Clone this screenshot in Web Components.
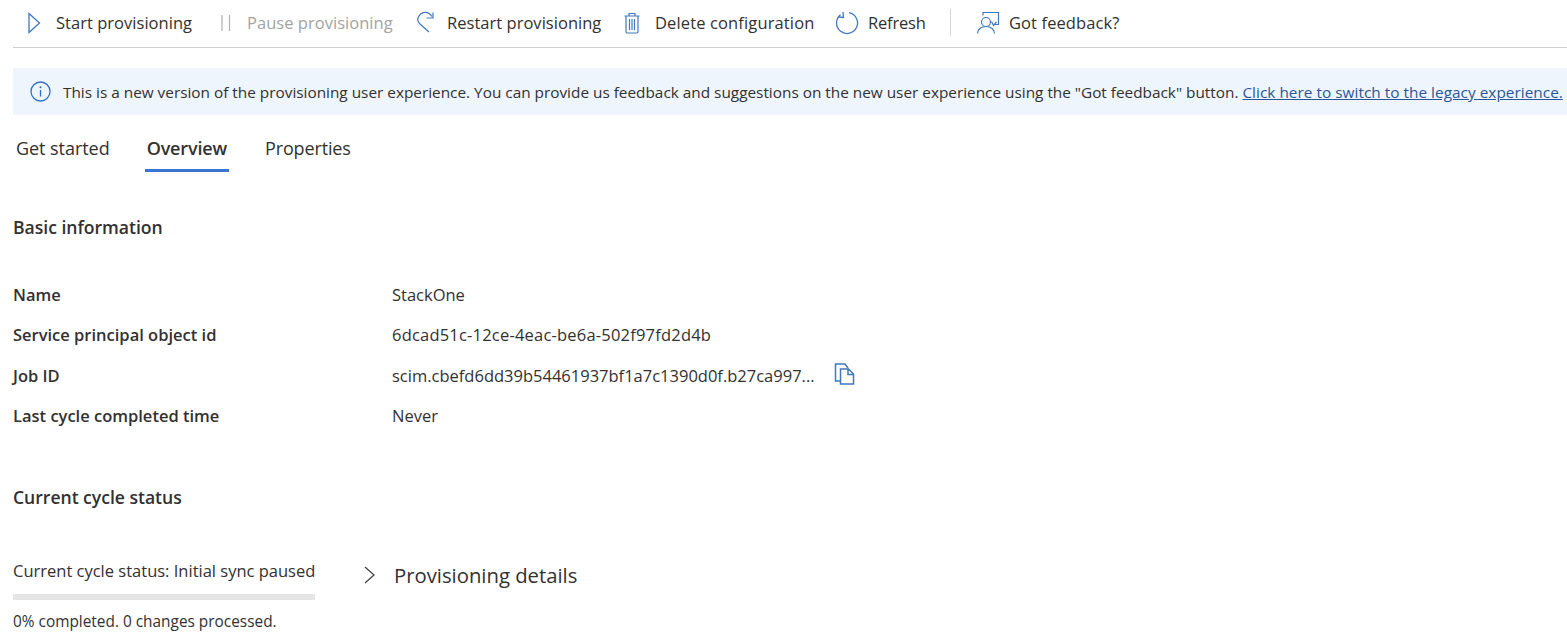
<!DOCTYPE html>
<html lang="en"><head><meta charset="utf-8"><title>Provisioning</title>
<style>
html,body{margin:0;background:#fff;height:100%;overflow:hidden}
body{font-family:"Open Sans","Noto Sans",sans-serif;color:#323130;font-size:16px}
</style></head><body>
<prov-page>
  <prov-toolbar>
    <tool-btn width="184" pad="14" text-x="29"><svg slot="icon" width="14" height="22" viewBox="0 0 14 22"><path d="M2 1.500v19l10.500-9.500z" fill="none" stroke="#3f78c0" stroke-width="1.300"/></svg>Start provisioning</tool-btn>
    <tool-btn disabled width="199" pad="23" text-x="27"><svg slot="icon" width="12" height="18" viewBox="0 0 12 18"><path d="M2 1v16M9.500 1v16" fill="none" stroke="#b5b5b5" stroke-width="1.300"/></svg>Pause provisioning</tool-btn>
    <tool-btn width="208" pad="20" text-x="31"><svg slot="icon" width="20" height="24" viewBox="0 1 20 24"><path d="M16 6.500C12 .5 5 1 2 8c-1 2 0 4 2 6l9 8" fill="none" stroke="#3f78c0" stroke-width="1.200"/><path d="M17 2.500V8h-6.500" fill="none" stroke="#3f78c0" stroke-width="1.200"/></svg>Restart provisioning</tool-btn>
    <tool-btn width="212" pad="20" text-x="31" style="letter-spacing:.13px"><svg slot="icon" width="16" height="22" viewBox="0 0 16 22"><path d="M.5 4h15M5 4V1.500h6V4M2 4v15.800a1.200 1.200 0 0 0 1.200 1.200h9.600a1.200 1.200 0 0 0 1.200-1.200V4M5.500 7v11M8 7v11M10.500 7v11" fill="none" stroke="#3f78c0" stroke-width="1.200"/></svg>Delete configuration</tool-btn>
    <tool-btn width="134" pad="19" text-x="33" style="letter-spacing:-.2px"><svg slot="icon" width="24" height="24" viewBox="0 0 24 24"><path d="M14 1.700A10.500 10.500 0 1 1 5.500 3.800" fill="none" stroke="#3f78c0" stroke-width="1.300"/><path d="M8 1l.5 5.500-5-.5" fill="none" stroke="#3f78c0" stroke-width="1.300"/></svg>Refresh</tool-btn>
    <tool-sep></tool-sep>
    <tool-btn width="170" pad="25" text-x="33" style="letter-spacing:.1px"><svg slot="icon" width="24" height="24" viewBox="0 0 24 24"><path d="M7 4.500V1.500h15.500v12h-5" fill="none" stroke="#3f78c0" stroke-width="1.200"/><circle cx="10" cy="11" r="4.500" fill="none" stroke="#3f78c0" stroke-width="1.200"/><path d="M1.500 22.500c0-4 3.500-7 8.500-7s8.500 3 8.500 7" fill="none" stroke="#3f78c0" stroke-width="1.200"/><path d="M15.500 10.500l2 4 3-3.500" fill="none" stroke="#3f78c0" stroke-width="1.200"/></svg>Got feedback?</tool-btn>
  </prov-toolbar>
  <info-banner>This is a new version of the provisioning user experience. You can provide us feedback and suggestions on the new user experience using the "Got feedback" button. <a slot="link" href="#">Click here to switch to the legacy experience.</a></info-banner>
  <tab-bar>
    <tab-item>Get started</tab-item>
    <tab-item active>Overview</tab-item>
    <tab-item style="letter-spacing:-.15px">Properties</tab-item>
  </tab-bar>
  <section-head style="margin-top:43px">Basic information</section-head>
  <kv-list style="margin-top:35px">
    <kv-row label="Name">StackOne</kv-row>
    <kv-row label="Service principal object id" style="letter-spacing:.2px">6dcad51c-12ce-4eac-be6a-502f97fd2d4b</kv-row>
    <kv-row label="Job ID">scim.cbefd6dd39b54461937bf1a7c1390d0f.b27ca997...<svg slot="after" width="21" height="22" viewBox="0 0 21 22"><path d="M6.500 18H1.500V1H11l3 4" fill="none" stroke="#3f78c0" stroke-width="1.500"/><path d="M6.500 6h8l5 5v10h-13zM14 6v5.500h5.500" fill="none" stroke="#3f78c0" stroke-width="1.500"/></svg></kv-row>
    <kv-row label="Last cycle completed time">Never</kv-row>
  </kv-list>
  <section-head style="margin-top:49px">Current cycle status</section-head>
  <cycle-panel style="margin-top:49px">
    <span slot="status">Current cycle status: Initial sync paused</span>
    <span slot="progress">0% completed. 0 changes processed.</span>
    <span slot="details">Provisioning details</span>
  </cycle-panel>
</prov-page>
<script>
function def(name, css, html, extra){
  customElements.define(name, class extends HTMLElement{
    constructor(){super();this.attachShadow({mode:'open'}).innerHTML='<style>'+css+'</style>'+html;}
    connectedCallback(){ if(extra) extra.call(this); }
  });
}
def('prov-page',':host{display:block;padding-left:13px}','<slot></slot>');
def('prov-toolbar',':host{display:flex;align-items:center;height:47px;border-bottom:1px solid #cfcfcf;white-space:nowrap}','<slot></slot>');
def('tool-btn',
 ':host{display:flex;align-items:center;height:47px;padding-bottom:2px;flex:none;box-sizing:border-box;font-size:16.500px;letter-spacing:.03px;color:#323130}:host([disabled]){color:#a3a3a3}.i{flex:none;display:flex;justify-content:flex-start;align-items:center}',
 '<span class="i"><slot name="icon"></slot></span><span><slot></slot></span>',
 function(){
  this.style.width=this.getAttribute('width')+'px';
  this.style.paddingLeft=this.getAttribute('pad')+'px';
  this.shadowRoot.querySelector('.i').style.width=this.getAttribute('text-x')+'px';
 });
def('tool-sep',':host{display:block;width:1px;height:27px;background:#d4d4d4;flex:none;margin-top:-3px}','');
def('info-banner',
 ':host{display:flex;align-items:center;height:47px;margin-top:20px;background:#eff5fc;white-space:nowrap;padding-left:17px;font-size:15.350px;overflow:hidden}svg{flex:none;margin-right:12px}::slotted(a){color:#2b5797;text-decoration:underline;letter-spacing:.03px}',
 '<svg width="21" height="21" viewBox="0 0 21 21"><circle cx="10.500" cy="10.500" r="9.500" fill="none" stroke="#2f6fcf" stroke-width="1.300"/><circle cx="10.500" cy="6.300" r="1" fill="#2f6fcf"/><path d="M10.500 9v6.500" stroke="#2f6fcf" stroke-width="1.300"/></svg><span><slot></slot><slot name="link"></slot></span>');
def('tab-bar',':host{display:flex;margin-top:10px;height:47px}','<slot></slot>');
def('tab-item',
 ':host{display:block;box-sizing:border-box;height:47px;padding:9.500px 2px 0;margin:0 34px 0 0;font-size:18px;letter-spacing:-.05px;color:#323130;border-bottom:3px solid transparent;line-height:26px}:host([active]){font-weight:600;border-bottom-color:#3a75cf;letter-spacing:-.15px}:host(:first-child){padding-left:3px;margin-right:33px}',
 '<slot></slot>');
def('section-head',':host{display:block;font-size:17.600px;font-weight:600;line-height:24px;letter-spacing:-.03px}','<slot></slot>');
def('kv-list',':host{display:flex;flex-direction:column}','<slot></slot>');
def('kv-row',
 ':host{display:grid;grid-template-columns:379px auto;align-items:center;height:40.500px;font-size:16.500px}.l{font-weight:600;letter-spacing:0}.v{display:flex;align-items:center}::slotted(svg){margin-left:19px;margin-top:-2px}',
 '<span class="l"></span><span class="v"><slot></slot><slot name="after"></slot></span>',
 function(){this.shadowRoot.querySelector('.l').textContent=this.getAttribute('label');});
def('cycle-panel',
 ':host{display:flex;font-size:16.500px}.left{width:302px;flex:none}.status{line-height:26px;white-space:nowrap}.bar{height:6px;background:#e5e5e5;margin-top:10px}.progress{margin-top:11px;line-height:22px;white-space:nowrap;font-size:15.400px}.right{display:flex;align-items:center;height:28px;margin-left:48px;margin-top:3px;font-size:20.300px}svg{margin-right:18px;flex:none}',
 '<div class="left"><div class="status"><slot name="status"></slot></div><div class="bar"></div><div class="progress"><slot name="progress"></slot></div></div><div class="right"><svg width="13" height="20" viewBox="0 0 13 20"><path d="M2 2l9 8-9 8" fill="none" stroke="#444" stroke-width="1.300"/></svg><slot name="details"></slot></div>');
</script>
</body></html>
